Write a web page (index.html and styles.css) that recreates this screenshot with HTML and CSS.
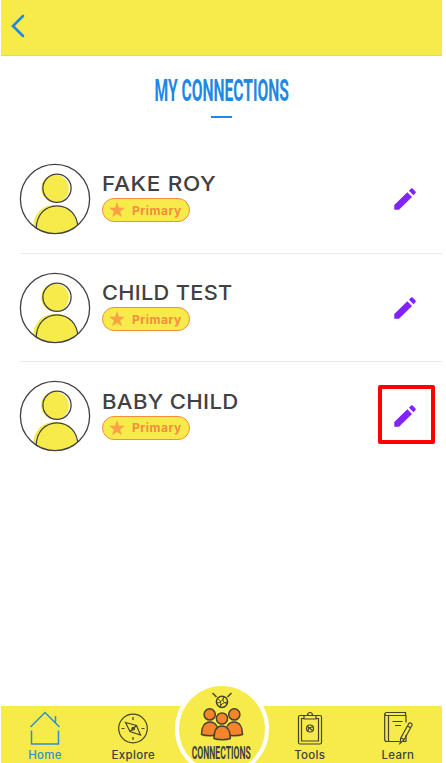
FILE: index.html
```html
<!DOCTYPE html>
<html lang="en">
<head>
    <meta charset="UTF-8">
    <meta name="viewport" content="width=device-width, initial-scale=1.0">
    <title>My Connections</title>
    <link rel="stylesheet" href="styles.css">
</head>
<body>
    <!-- Shared shapes -->
    <svg class="defs" width="0" height="0">
        <symbol id="avatar" viewBox="0 0 72 72">
            <clipPath id="round"><circle cx="36" cy="36" r="34.6"/></clipPath>
            <g clip-path="url(#round)">
                <circle cx="36" cy="25.6" r="13.9" fill="#f6eb4a"/>
                <path d="M14 66c0-14 8-24 22-24s21 8 23 22l-10 10H20z" fill="#f6eb4a"/>
                <path d="M17.200 66c0-14 9-23.200 20.800-23.200S59 52 59 66" fill="none" stroke="#414042" stroke-width="1.3"/>
            </g>
            <circle cx="38" cy="25.2" r="14.1" fill="none" stroke="#414042" stroke-width="1.3"/>
            <circle cx="36" cy="36" r="34.6" fill="none" stroke="#414042" stroke-width="1.3"/>
        </symbol>
        <symbol id="star" viewBox="0 0 24 24">
            <path d="M12 0l2.900 8.600H24l-7.300 5.500 2.700 8.900L12 17.600 4.600 23l2.700-8.900L0 8.600h9.100z" fill="#fba045"/>
        </symbol>
        <symbol id="pencil" viewBox="0 0 22 22">
            <path d="M.3 17v4.700H5L18 8.900l-4.700-4.600zM15 2.700L17 .6q.8-.7 1.600 0l2.900 2.900q.7.800 0 1.600l-2 2.200z" fill="#8222ff"/>
        </symbol>
    </svg>

    <div class="screen">
        <header>
            <a class="back" href="#">
                <svg width="16" height="24" viewBox="0 0 16 24"><path d="M13 2L3 12l10 10"/></svg>
            </a>
        </header>

        <main>
            <h1><span>MY CONNECTIONS</span></h1>

            <ul class="list">
                <li>
                    <svg class="avatar"><use href="#avatar"/></svg>
                    <div class="info">
                        <div class="name roy">FAKE ROY</div>
                        <div class="badge"><svg><use href="#star"/></svg>Primary</div>
                    </div>
                    <a class="edit" href="#"><svg><use href="#pencil"/></svg></a>
                </li>
                <li>
                    <svg class="avatar"><use href="#avatar"/></svg>
                    <div class="info">
                        <div class="name test">CHILD TEST</div>
                        <div class="badge"><svg><use href="#star"/></svg>Primary</div>
                    </div>
                    <a class="edit" href="#"><svg><use href="#pencil"/></svg></a>
                </li>
                <li>
                    <svg class="avatar"><use href="#avatar"/></svg>
                    <div class="info">
                        <div class="name baby">BABY CHILD</div>
                        <div class="badge"><svg><use href="#star"/></svg>Primary</div>
                    </div>
                    <a class="edit marked" href="#"><svg><use href="#pencil"/></svg></a>
                </li>
            </ul>
        </main>

        <nav>
            <a class="active" href="#">
                <svg width="32" height="36" viewBox="0 0 32 36">
                    <path d="M1.500 17L16 2.500 30.500 17M26.500 13V6M2.500 20.500V34h27V20.500"/>
                </svg>
                Home
            </a>
            <a href="#">
                <svg width="32" height="36" viewBox="0 0 32 36">
                    <circle cx="16" cy="18.500" r="14.300"/>
                    <path d="M16 7v3M16 27v3M4.500 18.500h3M24.500 18.500h3"/>
                    <path d="M8.500 12.500l11 3 4 9.500-10.500-3.500zM13 21.500l6.500-6"/>
                    <circle cx="16.200" cy="18.700" r="1.300"/>
                </svg>
                Explore
            </a>
            <div class="center-tab">
                <a class="bubble" href="#">
                    <svg width="46" height="50" viewBox="0 0 46 50">
                        <path d="M13.500 2l4 4M32.500 2l-4 4"/>
                        <circle cx="23" cy="10.800" r="5.600"/>
                        <path d="M18.500 8c3 1 4 3.500 2.500 8M28 12.500c-4-1-5-3-3-7M18 12c3 0 6-3 7-6M21 16c1-3 3-4 7-5" stroke-width="1"/>
                        <g class="people">
                            <path d="M2.500 43.500C2.500 36 5.500 31 11 31s8.500 5 8.500 12.500c-4 1.500-13 1.500-17 0z"/>
                            <circle cx="10.700" cy="23.400" r="5.600"/>
                            <path d="M26.500 43.500C26.500 36 29.500 31 35 31s8.500 5 8.500 12.500c-4 1.500-13 1.500-17 0z"/>
                            <circle cx="35.300" cy="23.400" r="5.600"/>
                            <path d="M15 47.500c0-8 3-12.500 8-12.500s8.300 4.500 8.300 12.500c-4 1.500-12.300 1.500-16.300 0z"/>
                            <circle cx="23" cy="27.500" r="5.600"/>
                        </g>
                    </svg>
                    <span>CONNECTIONS</span>
                </a>
            </div>
            <a href="#">
                <svg width="32" height="36" viewBox="0 0 32 36">
                    <rect x="4.500" y="5.500" width="23" height="28.500" rx="1.500"/>
                    <path d="M10 8.500H7.500v22.500h17V8.500H22M10 5.500v3.500h12V5.500h-3.500c0-4-5-4-5 0"/>
                    <circle cx="16" cy="18.500" r="3.500"/>
                    <path d="M13.500 16.500l5 4M14 21c0-3 2-4 5-4"/>
                </svg>
                Tools
            </a>
            <a href="#">
                <svg width="32" height="36" viewBox="0 0 32 36">
                    <path d="M24 12.500V5.500H5c-3 0-3-3 0-3h18.500v3M2.700 4v25.500c0 1.500 1 2 2.300 2h12.500M6.500 5.500v26M24 25v6.500h-3"/>
                    <path d="M10.500 11.500h10M13 15.500h6"/>
                    <path d="M18 33.500l.8-5.500 8-14.500c1-1.500 4 0 3.200 1.800l-7.700 14.200zM18.800 28l3.500 1.500M25.500 16l3.500 2"/>
                </svg>
                Learn
            </a>
        </nav>
    </div>
</body>
</html>
```
FILE: styles.css
```css
* {
    box-sizing: border-box;
}
body {
    margin: 0;
    background: #fff;
    font-family: Inter, Roboto, sans-serif;
    color: #414042;
}
a {
    color: inherit;
    text-decoration: none;
}
.defs {
    display: block;
}
.screen {
    display: flex;
    flex-direction: column;
    width: 441px;
    height: 763px;
    margin-left: 1px;
    overflow: hidden;
}
header {
    display: flex;
    align-items: center;
    height: 56px;
    padding: 0 0 4px 9px;
    background: #f6eb4a;
    border-bottom: 1px solid #d6d3a6;
}
.back svg {
    display: block;
    fill: none;
    stroke: #1e88e5;
    stroke-width: 2.6;
    stroke-linecap: round;
}
main {
    flex: 1;
}

/* Title */
h1 {
    display: flex;
    flex-direction: column;
    align-items: center;
    height: 89px;
    margin: 0;
    padding-top: 17px;
    font: 700 32px/34px Roboto, sans-serif;
    color: #1e88e5;
    white-space: nowrap;
}
h1 span {
    transform: scaleX(0.488);
}
h1::after {
    content: "";
    width: 21px;
    height: 2px;
    margin-top: 9px;
    background: #1e88e5;
}

/* Connections */
.list {
    margin: 0;
    padding: 0 0 0 19px;
    list-style: none;
}
.list li {
    display: flex;
    align-items: center;
    height: 108.7px;
    border-bottom: 1.5px solid #e9e9e9;
}
.list li:last-child {
    border-color: transparent;
}
.avatar {
    width: 72px;
    height: 72px;
    margin-left: -1px;
}
.info {
    flex: 1;
    margin: -4px 0 0 11px;
}
.name {
    font-size: 20.5px;
    font-weight: 500;
    line-height: 26px;
    transform-origin: left;
}
.roy {
    letter-spacing: 0.6px;
    transform: scaleX(1.1);
}
.test {
    letter-spacing: 0.3px;
    transform: scaleX(1.06);
}
.baby {
    letter-spacing: 0.3px;
    transform: scaleX(1.08);
}
.badge {
    display: flex;
    align-items: center;
    gap: 7px;
    width: 88px;
    height: 24px;
    margin-top: 1px;
    padding-left: 6px;
    border: 1px solid #f58d3d;
    border-radius: 12px;
    background: #f6eb4a;
    color: #f58d3d;
    font-size: 12px;
    font-weight: 700;
    letter-spacing: 0.5px;
}
.badge svg {
    width: 16px;
    height: 16px;
}
.edit {
    position: relative;
    margin-right: 26px;
}
.edit svg {
    display: block;
    width: 22px;
    height: 22px;
}
.marked::after {
    content: "";
    position: absolute;
    inset: -20px -19px -17px -16px;
    border: 4px solid #f00;
    border-radius: 2px;
}

/* Bottom bar */
nav {
    display: grid;
    grid-template-columns: repeat(5, minmax(0, 1fr));
    height: 57px;
    background: #f6eb4a;
}
nav > a {
    display: flex;
    flex-direction: column;
    align-items: center;
    padding-top: 4px;
    font-size: 11.5px;
    font-weight: 500;
    line-height: 19px;
    letter-spacing: 0.3px;
}
nav svg {
    fill: none;
    stroke: #45432f;
    stroke-width: 1.2;
}
nav .active {
    color: #2e8fd0;
}
nav .active svg {
    stroke: #2e8fd0;
    stroke-width: 1.5;
}
.center-tab {
    display: flex;
    justify-content: center;
}
.bubble {
    display: flex;
    flex-direction: column;
    align-items: center;
    flex: none;
    width: 94px;
    height: 94px;
    margin-top: -24px;
    padding-top: 5px;
    border: 4px solid #fff;
    border-radius: 50%;
    background: #f6eb4a;
}
.bubble svg {
    flex: none;
    stroke-width: 1.5;
}
.bubble .people {
    fill: #f5842b;
}
.bubble span {
    margin-top: 2px;
    font: 700 17.5px/20px Roboto, sans-serif;
    transform: scaleX(0.49);
}
```
